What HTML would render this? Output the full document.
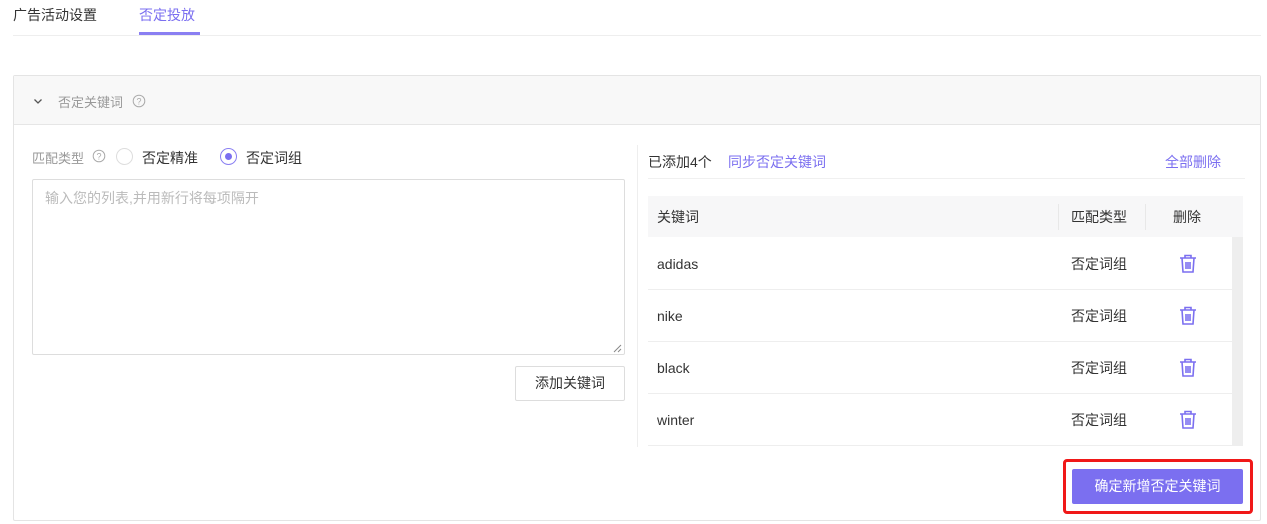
<!DOCTYPE html>
<html><head><meta charset="utf-8"><style>
*{margin:0;padding:0;box-sizing:border-box}
body{width:1267px;height:524px;background:#fff;font-family:"Liberation Sans","Noto Sans CJK SC",sans-serif;font-size:14px;color:#333;position:relative;overflow:hidden}
.a{position:absolute;white-space:nowrap}
.g{color:#999}
.p{color:#7b6ff0}
.row{position:absolute;left:648px;width:584px;height:52px;border-bottom:1px solid #eee}
.row span{position:absolute;top:16px;line-height:20px;height:20px}
</style></head><body>
<div class="a" style="left:13px;top:5px;color:#333">广告活动设置</div>
<div class="a p" style="left:139px;top:5px">否定投放</div>
<div class="a" style="left:139px;top:32px;width:61px;height:3px;background:#8a7ff2"></div>
<div class="a" style="left:13px;top:35px;width:1248px;height:1px;background:#eee"></div>

<div class="a" style="left:13px;top:75px;width:1248px;height:446px;border:1px solid #e4e4e4;border-radius:2px"></div>
<div class="a" style="left:14px;top:76px;width:1246px;height:49px;background:#f8f8f8;border-bottom:1px solid #e6e6e6"></div>
<svg class="a" style="left:32px;top:96px" width="12" height="10" viewBox="0 0 12 10"><path d="M2.5 3.5l3.5 3.5 3.5-3.5" fill="none" stroke="#555" stroke-width="1.3"/></svg>
<div class="a g" style="left:58px;top:92px;font-size:13px">否定关键词</div>
<svg class="a" style="left:132px;top:94px" width="14" height="14" viewBox="0 0 14 14"><circle cx="7" cy="7" r="5.8" fill="none" stroke="#aaa"/><text x="7" y="10.5" font-size="9" text-anchor="middle" fill="#aaa" font-family="Liberation Sans">?</text></svg>

<div class="a g" style="left:32px;top:148px;font-size:13px">匹配类型</div>
<svg class="a" style="left:92px;top:149px" width="14" height="14" viewBox="0 0 14 14"><circle cx="7" cy="7" r="5.8" fill="none" stroke="#aaa"/><text x="7" y="10.5" font-size="9" text-anchor="middle" fill="#aaa" font-family="Liberation Sans">?</text></svg>
<div class="a" style="left:116px;top:148px;width:17px;height:17px;border:1px solid #ddd;border-radius:50%"></div>
<div class="a" style="left:142px;top:148px">否定精准</div>
<div class="a" style="left:220px;top:148px;width:17px;height:17px;border:1px solid #8a7ff2;border-radius:50%"></div>
<div class="a" style="left:225px;top:153px;width:7px;height:7px;background:#7b6ff0;border-radius:50%"></div>
<div class="a" style="left:246px;top:148px">否定词组</div>

<div class="a" style="left:32px;top:179px;width:593px;height:176px;border:1px solid #ddd;border-radius:2px"></div>
<div class="a" style="left:45px;top:188px;color:#bbb">输入您的列表,并用新行将每项隔开</div>
<svg class="a" style="left:612px;top:343px" width="10" height="10"><path d="M2 9L9 2M6 9L9 6" stroke="#888" stroke-width="1"/></svg>
<div class="a" style="left:515px;top:366px;width:110px;height:35px;border:1px solid #ddd;border-radius:2px;text-align:center;line-height:33px">添加关键词</div>

<div class="a" style="left:637px;top:145px;width:1px;height:302px;background:#eee"></div>

<div class="a" style="left:648px;top:152px">已添加4个</div>
<div class="a p" style="left:728px;top:152px">同步否定关键词</div>
<div class="a p" style="left:1165px;top:152px">全部删除</div>
<div class="a" style="left:648px;top:178px;width:597px;height:1px;background:#f0f0f0"></div>

<div class="a" style="left:648px;top:196px;width:595px;height:41px;background:#f7f7f8"></div>
<div class="a" style="left:657px;top:207px">关键词</div>
<div class="a" style="left:1058px;top:204px;width:1px;height:26px;background:#e8e8e8"></div>
<div class="a" style="left:1071px;top:207px">匹配类型</div>
<div class="a" style="left:1145px;top:204px;width:1px;height:26px;background:#e8e8e8"></div>
<div class="a" style="left:1173px;top:207px">删除</div>
<div class="a" style="left:1232px;top:237px;width:11px;height:209px;background:#eee"></div>

<div class="row" style="top:238px"><span style="left:9px">adidas</span><span style="left:423px">否定词组</span></div>
<div class="row" style="top:290px"><span style="left:9px">nike</span><span style="left:423px">否定词组</span></div>
<div class="row" style="top:342px"><span style="left:9px">black</span><span style="left:423px">否定词组</span></div>
<div class="row" style="top:394px"><span style="left:9px">winter</span><span style="left:423px">否定词组</span></div>

<svg class="a" style="left:1179px;top:254px" width="18" height="20" viewBox="0 0 18 20"><g fill="none" stroke="#7b6ff0" stroke-width="1.6"><path d="M1 4h16M6 4V1.5h6V4M3 4l1 14h10l1-14M7 8v7M9 8v7M11 8v7"/></g></svg>
<svg class="a" style="left:1179px;top:306px" width="18" height="20" viewBox="0 0 18 20"><g fill="none" stroke="#7b6ff0" stroke-width="1.6"><path d="M1 4h16M6 4V1.5h6V4M3 4l1 14h10l1-14M7 8v7M9 8v7M11 8v7"/></g></svg>
<svg class="a" style="left:1179px;top:358px" width="18" height="20" viewBox="0 0 18 20"><g fill="none" stroke="#7b6ff0" stroke-width="1.6"><path d="M1 4h16M6 4V1.5h6V4M3 4l1 14h10l1-14M7 8v7M9 8v7M11 8v7"/></g></svg>
<svg class="a" style="left:1179px;top:410px" width="18" height="20" viewBox="0 0 18 20"><g fill="none" stroke="#7b6ff0" stroke-width="1.6"><path d="M1 4h16M6 4V1.5h6V4M3 4l1 14h10l1-14M7 8v7M9 8v7M11 8v7"/></g></svg>

<div class="a" style="left:1063px;top:459px;width:190px;height:55px;border:3px solid #f01818;border-radius:4px"></div>
<div class="a" style="left:1072px;top:469px;width:171px;height:35px;background:#7b6ff0;border-radius:2px;color:#fff;text-align:center;line-height:35px">确定新增否定关键词</div>
</body></html>
